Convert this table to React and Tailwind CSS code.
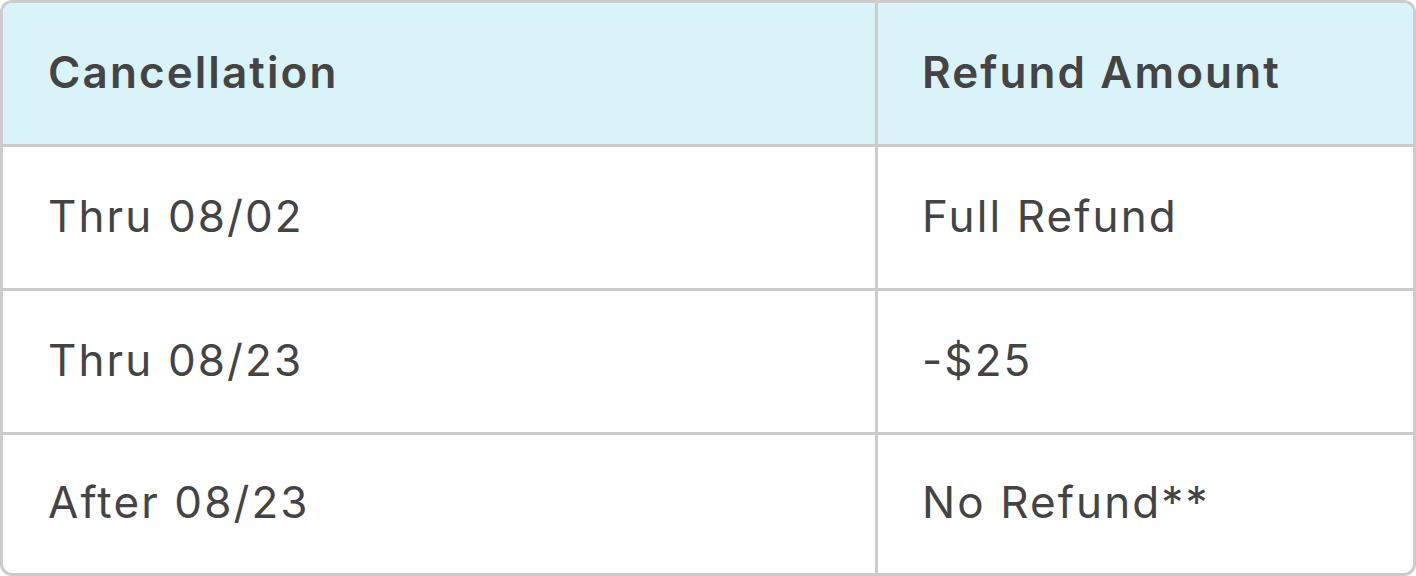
import React from "react";

const rows = [
  ["Thru 08/02", "Full Refund"],
  ["Thru 08/23", "-$25"],
  ["After 08/23", "No Refund**"],
];

export default function App() {
  return (
    <div className="w-[1416px] h-[576px] bg-white font-['Inter',sans-serif] text-[#444444] text-[44px] tracking-[2.1px]">
      <div className="h-full flex flex-col border-[3px] border-[#cccccc] rounded-[12px] overflow-hidden">
        <div className="flex h-[144px] shrink-0 bg-[#daf3f8] border-b-[3px] border-[#cccccc]">
          <div className="w-[875px] shrink-0 border-r-[3px] border-[#cccccc] flex items-center pl-[45px] pb-1 font-semibold">
            Cancellation
          </div>
          <div className="flex-1 flex items-center pl-[44px] pb-1 font-semibold">
            Refund Amount
          </div>
        </div>
        {rows.map(([a, b], i) => (
          <div
            key={a}
            className={
              i < rows.length - 1
                ? "flex h-[144px] shrink-0 border-b-[3px] border-[#cccccc]"
                : "flex flex-1"
            }
          >
            <div className="w-[875px] shrink-0 border-r-[3px] border-[#cccccc] flex items-center pl-[45px] pb-1">
              {a}
            </div>
            <div className="flex-1 flex items-center pl-[44px] pb-1">{b}</div>
          </div>
        ))}
      </div>
    </div>
  );
}
